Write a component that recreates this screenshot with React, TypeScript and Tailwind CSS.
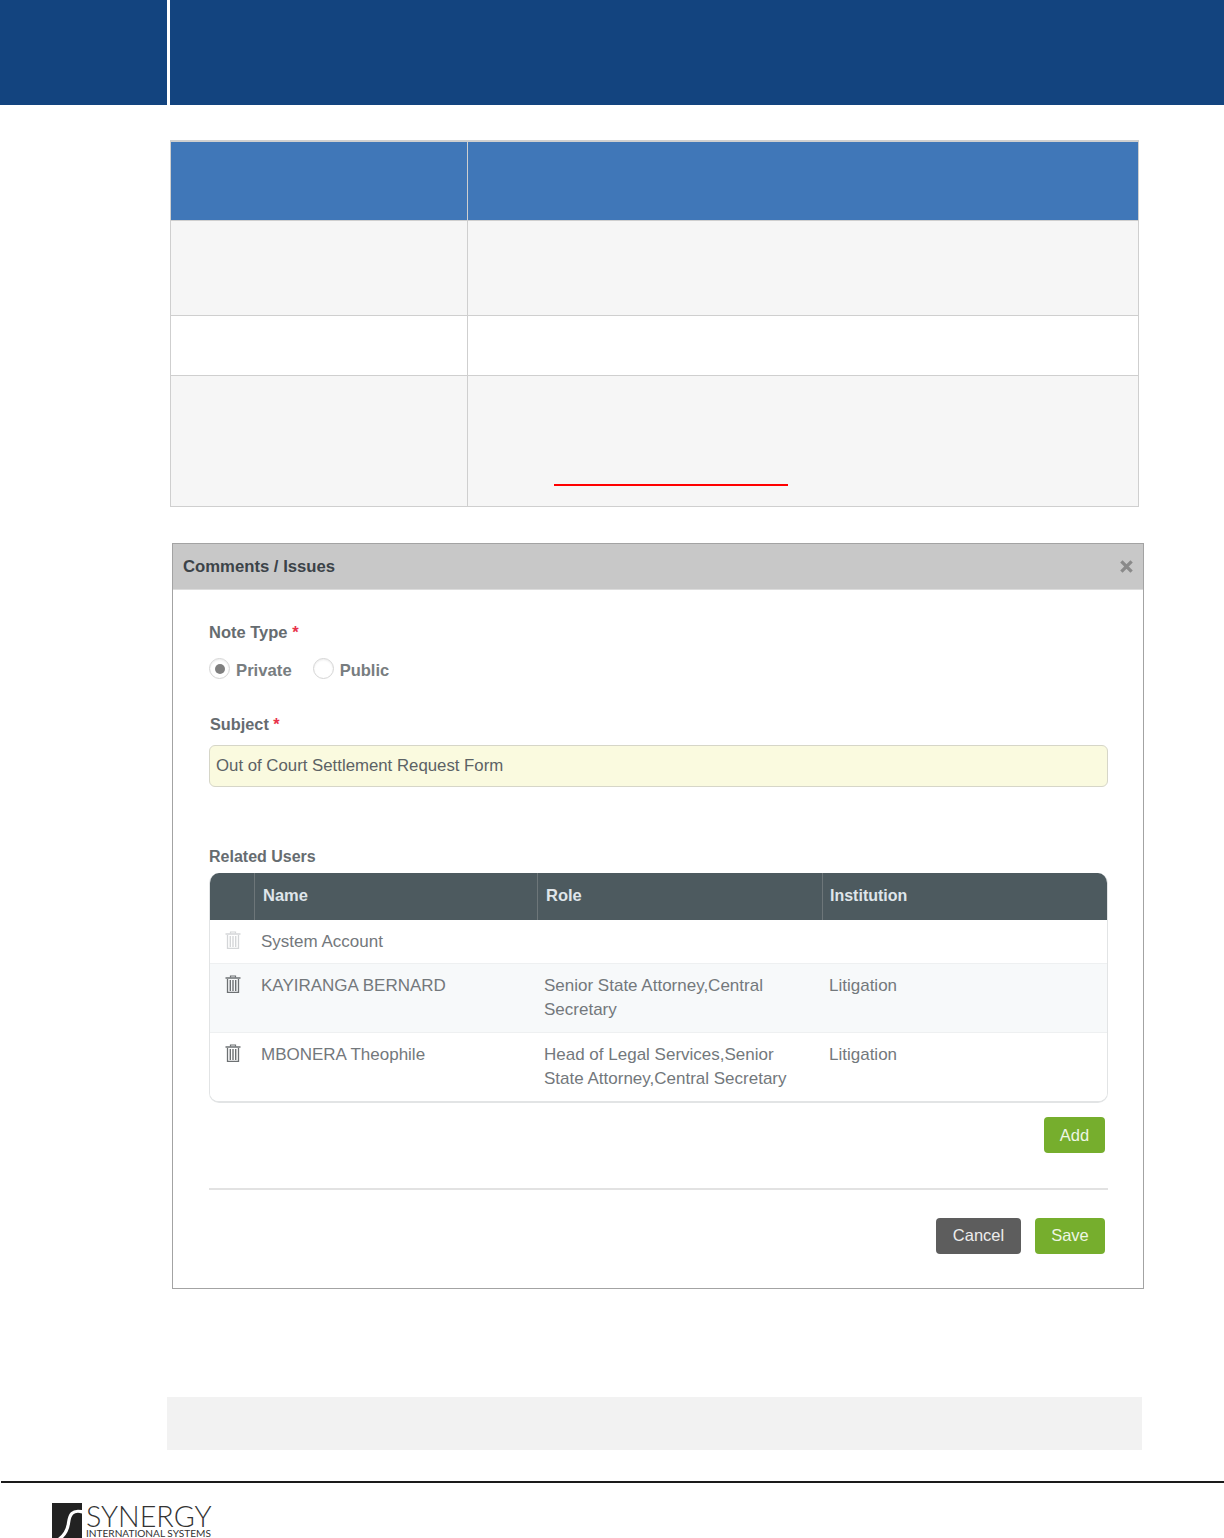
const users = [
  { name: 'System Account', role: '', institution: '', muted: true, height: 'h-[44px]' },
  { name: 'KAYIRANGA BERNARD', role: 'Senior State Attorney,Central Secretary', institution: 'Litigation', shaded: true, height: 'h-[69px]' },
  { name: 'MBONERA Theophile', role: 'Head of Legal Services,Senior State Attorney,Central Secretary', institution: 'Litigation', height: 'h-[68px]' },
];

const TrashIcon = ({ muted }: { muted?: boolean }) => (
  <svg viewBox="0 0 16 18" className={`h-[18px] w-4 ${muted ? 'text-[#d4d6d8]' : 'text-[#6d7173]'}`} fill="none" stroke="currentColor">
    <path d="M5.500 2.500V1h5v1.500" strokeWidth="1.200" />
    <path d="M.5 3h15" strokeWidth="1.600" />
    <path d="M2.500 4v13.300h11V4" strokeWidth="1.300" />
    <path d="M5.300 5v11M8 5v11M10.700 5v11" strokeWidth="1.400" />
  </svg>
);

const RadioDot = ({ checked }: { checked?: boolean }) => (
  <span className="flex h-[21px] w-[21px] items-center justify-center rounded-full border border-[#d5d5d5] bg-white shadow-[inset_0_1px_2px_rgba(0,0,0,0.08)]">
    {checked && <span className="h-[10px] w-[10px] rounded-full bg-[#808080]" />}
  </span>
);

const App = () => {
  return (
    <div className="flex h-[1538px] w-[1224px] flex-col overflow-hidden bg-white font-['Liberation_Sans',Arial,sans-serif]">
      <header className="flex h-[105px] shrink-0">
        <div className="w-[167px] bg-[#13447f]" />
        <div className="ml-[3px] flex-1 bg-[#13447f]" />
      </header>

      <table className="ml-[170px] mt-[35px] w-[969px] shrink-0 table-fixed border-collapse">
        <colgroup>
          <col className="w-[297px]" />
          <col />
        </colgroup>
        <tbody>
          <tr className="h-[79px] bg-[#4077b8]">
            <td className="border border-t-2 border-[#cfcfcf]" />
            <td className="border border-t-2 border-[#cfcfcf]" />
          </tr>
          <tr className="h-[95px] bg-[#f6f6f6]">
            <td className="border border-[#cfcfcf]" />
            <td className="border border-[#cfcfcf]" />
          </tr>
          <tr className="h-[60px] bg-white">
            <td className="border border-[#cfcfcf]" />
            <td className="border border-[#cfcfcf]" />
          </tr>
          <tr className="h-[131px] bg-[#f6f6f6]">
            <td className="border border-[#cfcfcf]" />
            <td className="border border-[#cfcfcf] pl-[86px] pt-[108px] align-top">
              <div className="h-[2px] w-[234px] bg-[#ff0000]" />
            </td>
          </tr>
        </tbody>
      </table>

      <section className="ml-[172px] mt-[36px] flex h-[746px] w-[972px] shrink-0 flex-col border border-[#a3a3a3]">
        <div className="flex h-[46px] shrink-0 items-center justify-between border-b border-[#dcdcdc] bg-[#c8c8c8] pl-[10px] pr-[10px]">
          <h2 className="pt-[2px] text-[16.700px] font-bold text-[#3c4348]">Comments / Issues</h2>
          <svg viewBox="0 0 14 14" className="h-[13px] w-[13px] text-[#8a8a8a]" fill="none" stroke="currentColor" strokeWidth="3.600">
            <path d="M1.500 1.500l11 11M12.500 1.500l-11 11" />
          </svg>
        </div>

        <div className="flex flex-1 flex-col pl-[36px] pr-[35px]">
          <div className="mt-[32px] text-[16.500px] font-bold leading-[20px] text-[#666c70]">
            Note Type <span className="text-[#e8334a]">*</span>
          </div>
          <div className="mt-[16px] flex h-[22px] items-center font-bold text-[#787d80]">
            <RadioDot checked />
            <span className="ml-[6px] pt-[4px] text-[16.700px]">Private</span>
            <span className="ml-[21px]"><RadioDot /></span>
            <span className="ml-[6px] pt-[4px] text-[16.500px]">Public</span>
          </div>

          <div className="ml-px mt-[34px] text-[16.300px] font-bold leading-[20px] text-[#666c70]">
            Subject <span className="text-[#e8334a]">*</span>
          </div>
          <div className="mt-[11px] flex h-[42px] items-center rounded-[6px] border border-[#d6d6c8] bg-[#fafadf] pl-[6px] text-[16.800px] text-[#5c6265]">
            Out of Court Settlement Request Form
          </div>

          <div className="mt-[60px] text-[16px] font-bold leading-[20px] text-[#666c70]">Related Users</div>
          <div className="mt-[6px] overflow-hidden rounded-[10px] border-b-2 border-l border-r border-[#e2e4e5]">
            <div className="grid h-[47px] grid-cols-[44px_283px_285px_1fr] bg-[#4d5a5f] text-[16.500px] font-bold text-[#dfe5ea]">
              <div />
              <div className="flex items-center border-l border-[#6d7679] pb-[2px] pl-[8px]">Name</div>
              <div className="flex items-center border-l border-[#6d7679] pb-[2px] pl-[8px]">Role</div>
              <div className="flex items-center border-l border-[#6d7679] pl-[7px] text-[16px]">Institution</div>
            </div>
            {users.map((user) => (
              <div
                key={user.name}
                className={`grid grid-cols-[44px_283px_285px_1fr] border-b border-[#eef0f1] text-[17px] leading-[24px] text-[#73787c] last:border-b-0 ${
                  user.shaded ? 'bg-[#f7f9fa]' : 'bg-white'
                } ${user.height}`}
              >
                <div className="pl-[15px] pt-[11px]">
                  <TrashIcon muted={user.muted} />
                </div>
                <div className="pl-[7px] pt-[10px]">{user.name}</div>
                <div className="pl-[7px] pr-[20px] pt-[10px]">{user.role}</div>
                <div className="pl-[7px] pt-[10px]">{user.institution}</div>
              </div>
            ))}
          </div>

          <div className="mt-[14px] flex justify-end pr-[3px]">
            <button className="h-[36px] w-[61px] rounded-[4px] bg-[#76ae2d] pt-[2px] text-[16.500px] text-[#eef6e4]">Add</button>
          </div>
          <div className="mt-[35px] border-t-2 border-[#e2e2e2]" />
          <div className="mt-[28px] flex justify-end gap-[14px] pr-[3px]">
            <button className="h-[36px] w-[85px] rounded-[4px] bg-[#5d5d5d] text-[16.500px] text-[#ececec]">Cancel</button>
            <button className="h-[36px] w-[70px] rounded-[4px] bg-[#76ae2d] text-[16.500px] text-[#eef6e4]">Save</button>
          </div>
        </div>
      </section>

      <div className="ml-[167px] mt-[108px] h-[53px] w-[975px] shrink-0 bg-[#f2f2f2]" />

      <footer className="ml-px mt-[31px] shrink-0 border-t-2 border-[#1a1a1a]">
        <div className="ml-[51px] mt-[20px] flex items-start">
          <svg viewBox="0 0 30 35" className="h-[35px] w-[30px]">
            <rect width="30" height="35" fill="#222" />
            <path d="M31 9C20 6 17.500 12 16.500 20 15.500 28 12 33 6 37" fill="none" stroke="#fff" strokeWidth="3.200" />
          </svg>
          <div className="ml-[4px] flex flex-col text-[#333]">
            <span className="font-['Lato',sans-serif] text-[28.700px] font-light leading-[26px]">SYNERGY</span>
            <span className="font-['Lato',sans-serif] text-[10.100px] leading-[9px]">INTERNATIONAL SYSTEMS</span>
          </div>
        </div>
      </footer>
    </div>
  );
};

export default App;
